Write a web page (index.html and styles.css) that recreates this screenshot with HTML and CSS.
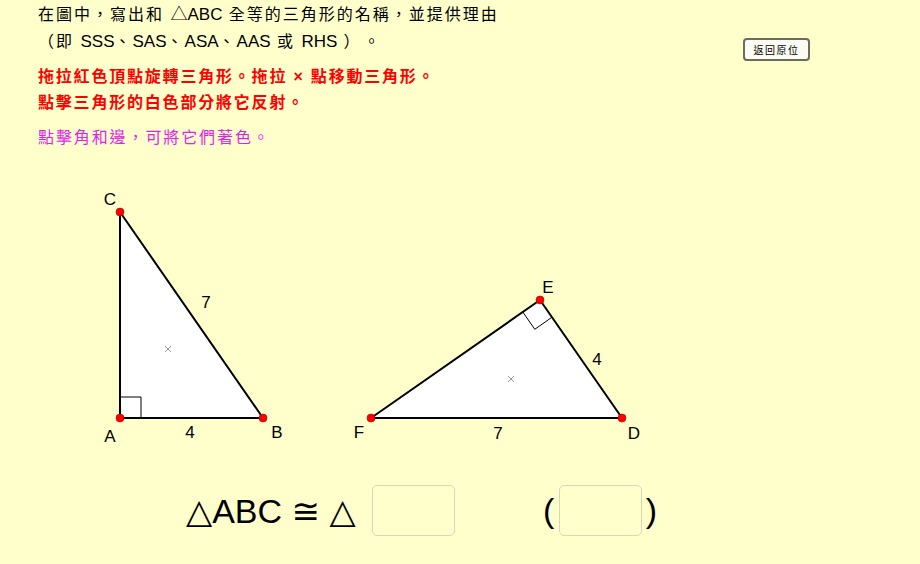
FILE: index.html
```html
<!DOCTYPE html>
<html lang="zh-Hant">
<head>
<meta charset="utf-8">
<title>全等三角形</title>
<link rel="stylesheet" href="styles.css">
</head>
<body>
<div class="stage">
  <div class="instructions">
    <div class="line black">在圖中，寫出和 <span class="lat">△ABC</span> 全等的三角形的名稱，並提供理由</div>
    <div class="line black">（即 <span class="lat">SSS</span>、<span class="lat">SAS</span>、<span class="lat">ASA</span>、<span class="lat">AAS</span> 或 <span class="lat">RHS</span><span class="wide">）</span>。</div>
    <div class="line red first">拖拉紅色頂點旋轉三角形。拖拉 × 點移動三角形。</div>
    <div class="line red">點擊三角形的白色部分將它反射。</div>
    <div class="line magenta first">點擊角和邊，可將它們著色。</div>
  </div>

  <button class="reset" type="button">返回原位</button>

  <svg class="canvas" width="920" height="330" viewBox="0 150 920 330" xmlns="http://www.w3.org/2000/svg">
    <!-- Triangle ABC -->
    <polygon points="120,418 263,418 120,212" fill="#ffffff" stroke="#000" stroke-width="2" stroke-linejoin="round"/>
    <polyline points="120,397 141,397 141,418" fill="none" stroke="#000" stroke-width="1"/>
    <g stroke="#9a9a9a" stroke-width="1">
      <line x1="165" y1="346" x2="171" y2="352"/>
      <line x1="171" y1="346" x2="165" y2="352"/>
    </g>
    <g class="dot">
      <circle cx="120" cy="212" r="4"/>
      <circle cx="120" cy="418" r="4"/>
      <circle cx="263" cy="418" r="4"/>
    </g>
    <g class="lbl">
      <text x="110" y="199">C</text>
      <text x="110" y="436">A</text>
      <text x="277" y="432">B</text>
      <text x="190" y="432">4</text>
      <text x="206" y="302">7</text>
    </g>

    <!-- Triangle DEF -->
    <polygon points="371,418 622,418 540,300" fill="#ffffff" stroke="#000" stroke-width="2" stroke-linejoin="round"/>
    <polyline points="522.8,312 534.8,329.3 552,317.2" fill="none" stroke="#000" stroke-width="1"/>
    <g stroke="#9a9a9a" stroke-width="1">
      <line x1="508" y1="376" x2="514" y2="382"/>
      <line x1="514" y1="376" x2="508" y2="382"/>
    </g>
    <g class="dot">
      <circle cx="540" cy="300" r="4"/>
      <circle cx="371" cy="418" r="4"/>
      <circle cx="622" cy="418" r="4"/>
    </g>
    <g class="lbl">
      <text x="548" y="287">E</text>
      <text x="597" y="359">4</text>
      <text x="359" y="432">F</text>
      <text x="498" y="433">7</text>
      <text x="634" y="433">D</text>
    </g>
  </svg>

  <div class="equation">
    <span class="expr">△ABC ≅ △</span>
    <span class="box"></span>
    <span class="paren open">(</span>
    <span class="box"></span>
    <span class="paren">)</span>
  </div>
</div>
</body>
</html>
```

FILE: styles.css
```css
html, body {
  margin: 0;
  padding: 0;
  background: #ffffcc;
}

.stage {
  position: relative;
  width: 920px;
  height: 564px;
  background: #ffffcc;
  overflow: hidden;
  display: flex;
  flex-direction: column;
}

.instructions {
  padding: 1px 0 0 38px;
  height: 150px;
  flex: none;
  box-sizing: border-box;
}

.line {
  font-family: "Liberation Sans", "Noto Sans CJK TC", sans-serif;
  font-size: 16px;
  line-height: 27px;
  height: 27px;
  white-space: nowrap;
  letter-spacing: 2px;
}

.line.black {
  color: #000;
}

.line .lat {
  letter-spacing: 0;
  font-size: 17px;
}

.line .wide {
  margin-left: 6px;
  margin-right: 10px;
}

.line.red {
  color: #ff0000;
  font-weight: bold;
  line-height: 26px;
  height: 26px;
  letter-spacing: 1.8px;
}

.line.magenta {
  color: #e61ee6;
  line-height: 26px;
  height: 26px;
  letter-spacing: 1.9px;
}

.line.first {
  margin-top: 9px;
}

.reset {
  position: absolute;
  left: 743px;
  top: 38px;
  width: 67px;
  height: 23px;
  padding: 0;
  border: 2px solid #6b6b5e;
  border-radius: 4px;
  background: #fbfbf4;
  font-family: "Noto Sans CJK TC", sans-serif;
  font-size: 10px;
  letter-spacing: 1.5px;
  color: #000;
  box-sizing: border-box;
}

.canvas {
  display: block;
  flex: none;
}

.dot circle {
  fill: #ff0000;
  stroke: #b00000;
  stroke-width: 0.6;
}

.lbl text {
  font-family: "Liberation Sans", sans-serif;
  font-size: 17px;
  fill: #000;
  text-anchor: middle;
  dominant-baseline: central;
}

.equation {
  display: flex;
  align-items: center;
  height: 51px;
  margin-top: 5px;
  padding-left: 186px;
  font-family: "Liberation Sans", "DejaVu Sans", sans-serif;
  font-size: 34px;
  color: #000;
  flex: none;
}

.expr {
  white-space: nowrap;
  width: 186px;
}

.box {
  width: 83px;
  height: 51px;
  box-sizing: border-box;
  border: 1px solid #d9d6bd;
  border-radius: 5px;
}

.paren {
  width: 15px;
  text-align: right;
}

.paren.open {
  margin-left: 88px;
  width: 16px;
  text-align: left;
}
```
